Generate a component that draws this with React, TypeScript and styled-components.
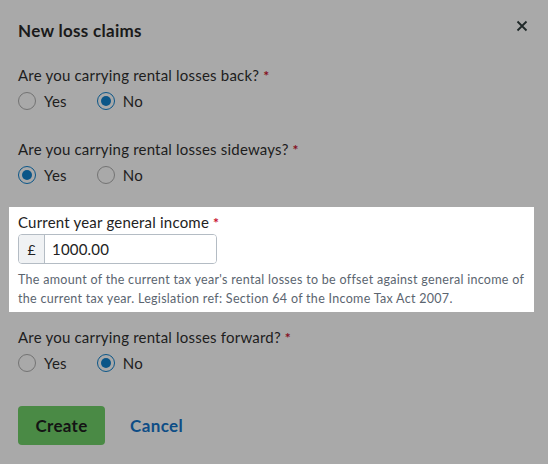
import React, { useState } from "react";
import styled, { createGlobalStyle } from "styled-components";

const GlobalStyle = createGlobalStyle`
  * { box-sizing: border-box; }
  body {
    margin: 0;
    background: #a9a9a9;
    font-family: "Lato", "Liberation Sans", sans-serif;
    color: #1d1d1d;
  }
`;

// styled components
const Modal = styled.div`
  width: 548px;
  height: 464px;
  padding: 19px 18px 0 18px;
  display: flex;
  flex-direction: column;
`;

const Header = styled.div`
  display: flex;
  align-items: flex-start;
  justify-content: space-between;
  height: 24px;
`;

const Title = styled.h2`
  margin: 0;
  font-size: 17px;
  line-height: 24px;
  font-weight: 700;
  letter-spacing: 0.3px;
  color: #1a1a1a;
`;

const CloseButton = styled.button`
  border: 0;
  background: none;
  padding: 0;
  width: 12px;
  height: 12px;
  margin: 1px 2px 0 0;
  display: flex;
  cursor: pointer;
`;

const Field = styled.div<{ $top: number }>`
  margin-top: ${(p) => p.$top}px;
  display: flex;
  flex-direction: column;
`;

const Highlight = styled.div<{ $top: number }>`
  margin: ${(p) => p.$top}px -9px 0 -9px;
  width: 525px;
  background: #ffffff;
  padding: 5px 9px 4px 9px;
  display: flex;
  flex-direction: column;
`;

const Label = styled.label<{ $light?: boolean }>`
  display: block;
  height: 20px;
  font-size: 15px;
  line-height: 20px;
  letter-spacing: 0.2px;
  color: ${(p) => (p.$light ? "#222" : "#1d1d1d")};
`;

const Required = styled.span<{ $light?: boolean }>`
  color: ${(p) => (p.$light ? "#c8102e" : "#85101f")};
  margin-left: 4px;
  font-weight: 700;
  font-size: 14px;
  line-height: 0;
`;

const RadioRow = styled.div`
  display: flex;
  gap: 30px;
  margin-top: 6px;
  height: 20px;
`;

const RadioOption = styled.label`
  display: flex;
  align-items: center;
  gap: 8px;
  font-size: 15px;
  line-height: 20px;
  letter-spacing: 0.2px;
  cursor: pointer;
`;

const RadioCircle = styled.span<{ $checked: boolean }>`
  width: 18px;
  height: 18px;
  flex-shrink: 0;
  border-radius: 50%;
  border: ${(p) => (p.$checked ? "1.5px solid #0b5688" : "1px solid #737373")};
  display: flex;
  align-items: center;
  justify-content: center;
  &::after {
    content: "";
    width: 10px;
    height: 10px;
    border-radius: 50%;
    background: #0b5688;
    display: ${(p) => (p.$checked ? "block" : "none")};
  }
`;

const InputGroup = styled.div`
  margin-top: 2px;
  width: 199px;
  height: 30px;
  display: flex;
  border: 1px solid #b4bcc4;
  border-radius: 4px;
  overflow: hidden;
`;

const Prefix = styled.span`
  width: 26px;
  flex-shrink: 0;
  background: #f0f2f4;
  border-right: 1px solid #b4bcc4;
  display: flex;
  align-items: center;
  justify-content: center;
  font-size: 14px;
  color: #222;
`;

const Input = styled.input`
  flex: 1;
  min-width: 0;
  border: 0;
  outline: none;
  padding: 0 7px;
  font-family: inherit;
  font-size: 15px;
  letter-spacing: 0.2px;
  color: #222;
`;

const Help = styled.p`
  margin: 6px 0 0 0;
  font-size: 12.5px;
  line-height: 19px;
  letter-spacing: 0.3px;
  color: #5b6570;
`;

const Actions = styled.div`
  margin-top: 33px;
  display: flex;
  align-items: center;
  gap: 25px;
`;

const PrimaryButton = styled.button`
  width: 87px;
  height: 39px;
  border: 0;
  border-radius: 4px;
  background: #4a8a45;
  color: #141414;
  font-family: inherit;
  font-size: 17px;
  font-weight: 700;
  letter-spacing: 0.3px;
  cursor: pointer;
`;

const LinkButton = styled.button`
  border: 0;
  background: none;
  padding: 0;
  color: #0d4d86;
  font-family: inherit;
  font-size: 17px;
  font-weight: 700;
  letter-spacing: 0.4px;
  cursor: pointer;
`;

type YesNo = "yes" | "no";

type RadioQuestionProps = {
  name: string;
  label: string;
  value: YesNo;
  onChange: (v: YesNo) => void;
  top: number;
};

function RadioQuestion({ name, label, value, onChange, top }: RadioQuestionProps) {
  return (
    <Field $top={top}>
      <Label>
        {label}
        <Required>*</Required>
      </Label>
      <RadioRow role="radiogroup" aria-label={name}>
        <RadioOption onClick={() => onChange("yes")}>
          <RadioCircle $checked={value === "yes"} />
          Yes
        </RadioOption>
        <RadioOption onClick={() => onChange("no")}>
          <RadioCircle $checked={value === "no"} />
          No
        </RadioOption>
      </RadioRow>
    </Field>
  );
}

export default function App() {
  const [back, setBack] = useState<YesNo>("no");
  const [sideways, setSideways] = useState<YesNo>("yes");
  const [forward, setForward] = useState<YesNo>("no");
  const [income, setIncome] = useState("1000.00");

  return (
    <>
      <GlobalStyle />
      <Modal>
        <Header>
          <Title>New loss claims</Title>
          <CloseButton aria-label="Close">
            <svg width="12" height="12" viewBox="0 0 12 12">
              <path d="M1.5 1.5 L10.5 10.5 M10.5 1.5 L1.5 10.5" stroke="#1f2828" strokeWidth="1.8" />
            </svg>
          </CloseButton>
        </Header>

        <RadioQuestion
          top={22}
          name="back"
          label="Are you carrying rental losses back?"
          value={back}
          onChange={setBack}
        />
        <RadioQuestion
          top={28}
          name="sideways"
          label="Are you carrying rental losses sideways?"
          value={sideways}
          onChange={setSideways}
        />

        <Highlight $top={22}>
          <Label $light>
            Current year general income
            <Required $light>*</Required>
          </Label>
          <InputGroup>
            <Prefix>£</Prefix>
            <Input value={income} onChange={(e) => setIncome(e.target.value)} />
          </InputGroup>
          <Help>
            The amount of the current tax year's rental losses to be offset against general income of
            the current tax year. Legislation ref: Section 64 of the Income Tax Act 2007.
          </Help>
        </Highlight>

        <RadioQuestion
          top={15}
          name="forward"
          label="Are you carrying rental losses forward?"
          value={forward}
          onChange={setForward}
        />

        <Actions>
          <PrimaryButton>Create</PrimaryButton>
          <LinkButton>Cancel</LinkButton>
        </Actions>
      </Modal>
    </>
  );
}
